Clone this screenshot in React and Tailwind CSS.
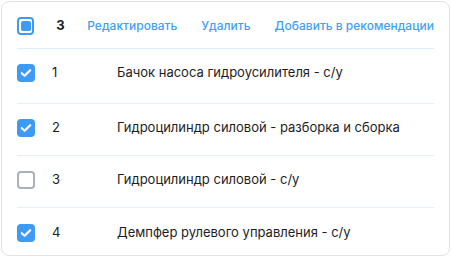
import React from 'react'

const rows = [
  { id: 1, name: 'Бачок насоса гидроусилителя - с/у', checked: true },
  { id: 2, name: 'Гидроцилиндр силовой - разборка и сборка', checked: true },
  { id: 3, name: 'Гидроцилиндр силовой - с/у', checked: false },
  { id: 4, name: 'Демпфер рулевого управления - с/у', checked: true },
]

const CheckBox = ({ state }) => {
  if (state === 'partial') {
    return (
      <span className="flex h-[18px] w-[18px] items-center justify-center rounded-[4px] border-2 border-[#3d9bf6]">
        <span className="h-[10px] w-[10px] rounded-[2px] bg-[#3d9bf6]" />
      </span>
    )
  }
  if (state === 'on') {
    return (
      <span className="flex h-[18px] w-[18px] items-center justify-center rounded-[4px] bg-[#3d9bf6]">
        <svg width="12" height="10" viewBox="0 0 12 10" fill="none">
          <path d="M1.8 5.2 4.6 7.8 10.2 2.2" stroke="white" strokeWidth="2.2" strokeLinecap="round" strokeLinejoin="round" />
        </svg>
      </span>
    )
  }
  return <span className="block h-[18px] w-[18px] rounded-[4px] border-2 border-[#a9b1ba]" />
}

export default function App() {
  return (
    <div className="h-[257px] w-[451px] bg-white p-px font-['Inter',sans-serif] text-[#1d1d1f]">
      <div className="h-full w-full rounded-lg border border-[#e3e3e3] bg-white px-[15px]">
        <div className="flex h-[47px] items-center border-b border-[#dcedfc] pt-[1px]">
          <CheckBox state="partial" />
          <span className="ml-[22px] w-[18px] text-[13px] font-bold">3</span>
          <div className="ml-[14px] flex gap-[24px] whitespace-nowrap text-[12px] font-medium text-[#42a0f3]">
            <span>Редактировать</span>
            <span>Удалить</span>
            <span>Добавить в рекомендации</span>
          </div>
        </div>
        {rows.map((row, index) => (
          <div
            key={row.id}
            className={
              'flex items-center text-[13px] ' +
              (index === 0 ? 'h-[55px] pb-[6px] ' : 'h-[52px] pb-[3px] ') +
              (index < rows.length - 1 ? 'border-b border-[#e6eef6]' : '')
            }
          >
            <CheckBox state={row.checked ? 'on' : 'off'} />
            <span className="ml-[17px] w-[65px]">{row.id}</span>
            <span>{row.name}</span>
          </div>
        ))}
      </div>
    </div>
  )
}
